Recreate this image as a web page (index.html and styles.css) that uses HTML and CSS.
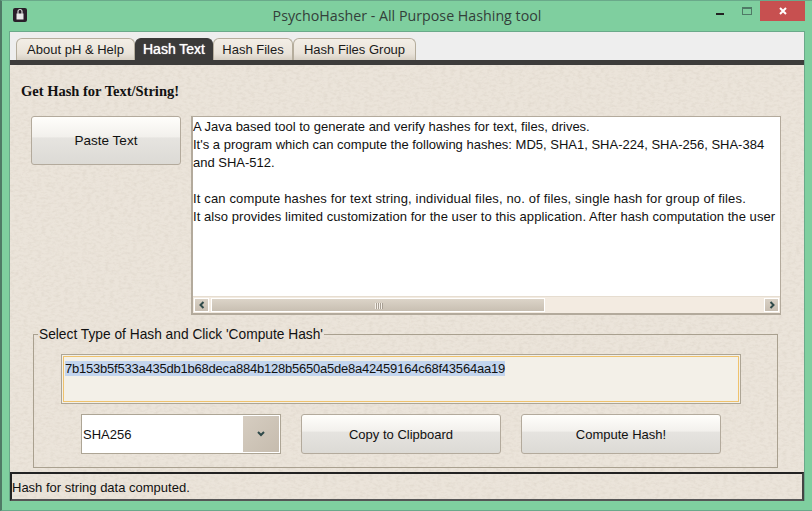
FILE: index.html
```html
<!DOCTYPE html>
<html lang="en">
<head>
<meta charset="utf-8">
<title>PsychoHasher</title>
<link rel="stylesheet" href="styles.css">
</head>
<body>
<div class="window">
  <header class="titlebar">
    <svg class="app-icon" width="14" height="14" viewBox="0 0 14 14"><rect width="14" height="14" rx="2" fill="#2a1f2a"/><rect x="3.5" y="5.5" width="7" height="6" fill="#e8e8e8"/><path d="M5 6V3.5a2 2 0 0 1 4 0V6" fill="none" stroke="#d8d8d8" stroke-width="1.2"/></svg>
    <h1 class="title">PsychoHasher - All Purpose Hashing tool</h1>
    <div class="win-controls">
      <svg class="win-min" width="8" height="2" viewBox="0 0 8 2"><rect width="8" height="2" fill="#222"/></svg>
      <svg class="win-max" width="10" height="8" viewBox="0 0 10 8"><rect x=".5" y=".5" width="9" height="7" fill="none" stroke="#4f7a66"/><rect width="10" height="2" fill="#4f7a66"/></svg>
      <div class="win-close"><svg width="8" height="8" viewBox="0 0 8 8"><path d="M1 1l6 6M7 1l-6 6" stroke="#fff" stroke-width="2"/></svg></div>
    </div>
  </header>
  <div class="client">
    <nav class="tabs">
      <div class="tab tab-about">About pH &amp; Help</div>
      <div class="tab tab-active">Hash Text</div>
      <div class="tab tab-files">Hash Files</div>
      <div class="tab tab-group">Hash Files Group</div>
    </nav>
    <main class="pane">
      <h2 class="heading">Get Hash for Text/String!</h2>
      <section class="input-row">
        <button class="btn btn-paste">Paste Text</button>
        <div class="textbox">
          <div class="textbox-text">
            <p>A Java based tool to generate and verify hashes for text, files, drives.</p>
            <p>It's a program which can compute the following hashes: MD5, SHA1, SHA-224, SHA-256, SHA-384</p>
            <p>and SHA-512.</p>
            <p>&nbsp;</p>
            <p class="line-wide">It can compute hashes for text string, individual files, no. of files, single hash for group of files.</p>
            <p class="line-wider">It also provides limited customization for the user to this application. After hash computation the user</p>
          </div>
          <div class="hscroll">
            <div class="sb-btn"><svg width="6" height="8" viewBox="0 0 6 8"><path d="M4.5 1L1.5 4l3 3" fill="none" stroke="#2f4a4a" stroke-width="2"/></svg></div>
            <div class="sb-thumb"><span class="grip"></span></div>
            <div class="sb-track"></div>
            <div class="sb-btn"><svg width="6" height="8" viewBox="0 0 6 8"><path d="M1.5 1l3 3-3 3" fill="none" stroke="#2f4a4a" stroke-width="2"/></svg></div>
          </div>
        </div>
      </section>
      <fieldset class="group">
        <legend class="group-legend">Select Type of Hash and Click 'Compute Hash'</legend>
        <div class="hash-field"><div class="hash-inner"><span class="hash-sel">7b153b5f533a435db1b68deca884b128b5650a5de8a42459164c68f43564aa19</span></div></div>
        <div class="controls">
          <div class="combo">
            <span class="combo-value">SHA256</span>
            <div class="combo-btn"><svg width="8" height="6" viewBox="0 0 8 6"><path d="M1 1l3 3 3-3" fill="none" stroke="#2f4a4a" stroke-width="2"/></svg></div>
          </div>
          <button class="btn btn-action">Copy to Clipboard</button>
          <button class="btn btn-action">Compute Hash!</button>
        </div>
      </fieldset>
      <footer class="status">Hash for string data computed.</footer>
    </main>
  </div>
</div>
</body>
</html>
```
FILE: styles.css
```css
* { box-sizing: border-box; }
html, body { margin: 0; height: 100%; }
body { width: 812px; height: 511px; overflow: hidden; background: #7fcf9f; font-family: "Liberation Sans", Arial, sans-serif; font-size: 13px; color: #111; }
.window { width: 812px; height: 511px; display: flex; flex-direction: column; background: #7fcf9f; border: 1px solid #6aa98a; border-left: 2px solid #4f7a66; border-right: none; padding: 0 7px 9px 7px; }
.titlebar { height: 30px; flex: none; position: relative; display: flex; align-items: flex-start; justify-content: center; }
.app-icon { position: absolute; left: 4px; top: 7px; }
.title { margin: 5px 0 0; font: 400 14.25px/20px "Open Sans", sans-serif; color: #33403a; }
.win-controls { position: absolute; top: 0; right: 0; width: 95px; height: 20px; }
.win-min { position: absolute; left: 6px; top: 12px; }
.win-max { position: absolute; left: 32px; top: 6px; }
.win-close { position: absolute; right: 0; top: 0; width: 45px; height: 20px; background: #c75050; display: flex; align-items: center; justify-content: center; }
.client { flex: 1; min-height: 0; display: flex; flex-direction: column; border-top: 1px solid #6aa98a; border-left: 1px solid #6aa98a; border-right: 1px solid #6aa98a; }
.tabs { height: 28px; flex: none; display: flex; align-items: flex-end; background: #eee; padding-left: 6px; }
.tab { height: 22px; padding-top: 2px; text-align: center; border: 1px solid #b5ad9c; border-bottom: none; border-radius: 6px 6px 0 0; background: linear-gradient(#f3eee6, #e9e3d9 70%, #d6cfc3); color: #1a1a1a; font-size: 13px; line-height: 18px; }
.tab-about { width: 119px; }
.tab-active { width: 78px; background: #3b3a39; border-color: #3b3a39; color: #fff; text-shadow: 0 0 1px #fff; padding-top: 1px; font-size: 14px; }
.tab-files { width: 80px; }
.tab-group { width: 123px; }
.pane { flex: 1; min-height: 0; display: flex; flex-direction: column; border-top: 5px solid #3d3c3b; background-color: #ebe4da; background-image: url("data:image/svg+xml,%3Csvg xmlns='http://www.w3.org/2000/svg' width='400' height='300'%3E%3Cfilter id='n'%3E%3CfeTurbulence type='fractalNoise' baseFrequency='.22 .4' numOctaves='3' seed='4'/%3E%3CfeColorMatrix values='0 0 0 0 .5 0 0 0 0 .44 0 0 0 0 .36 0 0 0 .4 -.16'/%3E%3C/filter%3E%3Crect width='400' height='300' filter='url(%23n)'/%3E%3C/svg%3E"); }
.heading { margin: 16px 0 0 11px; font: 700 14.5px/20px "Liberation Serif", serif; color: #111; height: 20px; }
.input-row { display: flex; align-items: flex-start; margin: 15px 22px 0 21px; gap: 10px; }
.btn { font: 400 13px "Liberation Sans", Arial, sans-serif; color: #111; border: 1px solid #b3aa9c; border-radius: 3px; background: linear-gradient(#fffefb, #f2f0ec 43%, #e6e4e0 44%, #dcdad5); padding: 0; }
.btn-paste { width: 150px; height: 49px; flex: none; font-size: 13.5px; }
.textbox { width: 590px; height: 199px; border: 2px solid #b3aa9c; border-top-width: 1px; border-right-width: 1px; background: #fff; display: flex; flex-direction: column; flex: none; }
.textbox-text { flex: 1; min-height: 0; overflow: hidden; padding: 1px 0 0 0; line-height: 18px; white-space: nowrap; }
.textbox-text p { margin: 0; }
.textbox-text .line-wide { letter-spacing: .15px; }
.textbox-text .line-wider { letter-spacing: .06px; }
.hscroll { height: 17px; flex: none; display: flex; background: #f3ebe1; padding: 1px; border-top: 1px solid #e6ddd0; }
.sb-btn { width: 15px; flex: none; border: 1px solid #fff; background: linear-gradient(#d9d1c5, #c8beb1); display: flex; align-items: center; justify-content: center; }
.sb-thumb { width: 334px; margin-left: 2px; flex: none; position: relative; border: 1px solid #fff; background: linear-gradient(#dcd4c8, #c8bfb2); }
.grip { position: absolute; left: 163px; top: 4px; width: 8px; height: 6px; background: repeating-linear-gradient(90deg, #f4efe8 0 1px, #a89f93 1px 2px); }
.sb-track { flex: 1; }
.group { margin: 10px 0 0 23px; width: 745px; height: 143px; padding: 0; border: 1px solid #a9a08f; flex: none; display: flex; flex-direction: column; }
.group-legend { margin-left: 4px; padding: 2px 1px 0; font-size: 13.75px; line-height: 16px; }
.hash-field { margin: 11px 0 0 27px; width: 680px; height: 50px; flex: none; border: 1px solid #ada595; padding: 1px; background: #f3f0e8; }
.hash-inner { height: 100%; border: 1px solid #efc26d; padding: 4px 0 0 1px; line-height: 15px; }
.hash-sel { display: inline-block; background: #c3d5ee; height: 15px; line-height: 15px; letter-spacing: -.22px; }
.controls { display: flex; margin: 10px 0 0 47px; gap: 20px; }
.combo { width: 200px; height: 40px; flex: none; display: flex; border: 1px solid #ada595; background: #fff; align-items: center; }
.combo-value { flex: 1; padding: 1px 0 0 1px; }
.combo-btn { width: 38px; height: 38px; border: 1px solid #fff; background: linear-gradient(135deg, #d6cdc1, #c6bcae); display: flex; align-items: center; justify-content: center; }
.btn-action { width: 200px; height: 40px; flex: none; padding-top: 1px; }
.status { margin-top: auto; height: 29px; flex: none; border: 2px solid #222; border-right-color: #444; border-bottom-color: #555; line-height: 27px; }
```
